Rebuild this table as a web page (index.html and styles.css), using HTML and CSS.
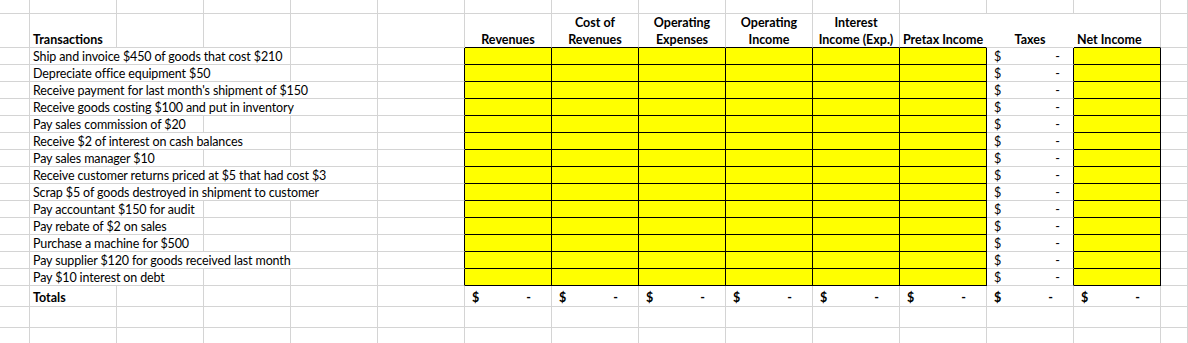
FILE: index.html
```html
<!DOCTYPE html>
<html>
<head>
<meta charset="utf-8">
<link rel="stylesheet" href="styles.css">
</head>
<body>
<div class="sheet">
  <!-- row 0 -->
  <div class="c"></div><div class="c"></div><div class="c"></div><div class="c"></div><div class="c"></div>
  <div class="c"></div><div class="c"></div><div class="c"></div><div class="c"></div><div class="c"></div>
  <div class="c"></div><div class="c"></div><div class="c"></div><div class="c"></div><div class="c"></div>

  <!-- header -->
  <div class="c"></div>
  <div class="c h"><span>Transactions</span></div>
  <div class="c"></div><div class="c"></div><div class="c"></div><div class="c"></div>
  <div class="c h hc bkb"><span>Revenues</span></div>
  <div class="c h hc bkb"><span>Cost of<br>Revenues</span></div>
  <div class="c h hc bkb"><span>Operating<br>Expenses</span></div>
  <div class="c h hc bkb"><span>Operating<br>Income</span></div>
  <div class="c h hc bkb"><span>Interest<br>Income (Exp.)</span></div>
  <div class="c h hc bkb nr"><span>Pretax Income</span></div>
  <div class="c h hc nr"><span>Taxes</span></div>
  <div class="c h bkb"><span>Net Income</span></div>
  <div class="c"></div>

  <!-- 1 -->
  <div class="c"></div>
  <div class="c d s3"><span>Ship and invoice $450 of goods that cost $210</span></div>
  <div class="c"></div><div class="c bkr"></div>
  <div class="c y"></div><div class="c y"></div><div class="c y"></div><div class="c y"></div><div class="c y"></div><div class="c y"></div>
  <div class="c m bkr"><span>$</span><span>-</span></div>
  <div class="c y"></div>
  <div class="c"></div>

  <!-- 2 -->
  <div class="c"></div>
  <div class="c d s3"><span>Depreciate office equipment $50</span></div>
  <div class="c"></div><div class="c bkr"></div>
  <div class="c y"></div><div class="c y"></div><div class="c y"></div><div class="c y"></div><div class="c y"></div><div class="c y"></div>
  <div class="c m bkr"><span>$</span><span>-</span></div>
  <div class="c y"></div>
  <div class="c"></div>

  <!-- 3 -->
  <div class="c"></div>
  <div class="c d s4"><span>Receive payment for last month's shipment of $150</span></div>
  <div class="c bkr"></div>
  <div class="c y"></div><div class="c y"></div><div class="c y"></div><div class="c y"></div><div class="c y"></div><div class="c y"></div>
  <div class="c m bkr"><span>$</span><span>-</span></div>
  <div class="c y"></div>
  <div class="c"></div>

  <!-- 4 -->
  <div class="c"></div>
  <div class="c d s4"><span>Receive goods costing $100 and put in inventory</span></div>
  <div class="c bkr"></div>
  <div class="c y"></div><div class="c y"></div><div class="c y"></div><div class="c y"></div><div class="c y"></div><div class="c y"></div>
  <div class="c m bkr"><span>$</span><span>-</span></div>
  <div class="c y"></div>
  <div class="c"></div>

  <!-- 5 -->
  <div class="c"></div>
  <div class="c d s2"><span>Pay sales commission of $20</span></div>
  <div class="c"></div><div class="c"></div><div class="c bkr"></div>
  <div class="c y"></div><div class="c y"></div><div class="c y"></div><div class="c y"></div><div class="c y"></div><div class="c y"></div>
  <div class="c m bkr"><span>$</span><span>-</span></div>
  <div class="c y"></div>
  <div class="c"></div>

  <!-- 6 -->
  <div class="c"></div>
  <div class="c d s3"><span>Receive $2 of interest on cash balances</span></div>
  <div class="c"></div><div class="c bkr"></div>
  <div class="c y"></div><div class="c y"></div><div class="c y"></div><div class="c y"></div><div class="c y"></div><div class="c y"></div>
  <div class="c m bkr"><span>$</span><span>-</span></div>
  <div class="c y"></div>
  <div class="c"></div>

  <!-- 7 -->
  <div class="c"></div>
  <div class="c d s2"><span>Pay sales manager $10</span></div>
  <div class="c"></div><div class="c"></div><div class="c bkr"></div>
  <div class="c y"></div><div class="c y"></div><div class="c y"></div><div class="c y"></div><div class="c y"></div><div class="c y"></div>
  <div class="c m bkr"><span>$</span><span>-</span></div>
  <div class="c y"></div>
  <div class="c"></div>

  <!-- 8 -->
  <div class="c"></div>
  <div class="c d s4"><span>Receive customer returns priced at $5 that had cost $3</span></div>
  <div class="c bkr"></div>
  <div class="c y"></div><div class="c y"></div><div class="c y"></div><div class="c y"></div><div class="c y"></div><div class="c y"></div>
  <div class="c m bkr"><span>$</span><span>-</span></div>
  <div class="c y"></div>
  <div class="c"></div>

  <!-- 9 -->
  <div class="c"></div>
  <div class="c d s4"><span>Scrap $5 of goods destroyed in shipment to customer</span></div>
  <div class="c bkr"></div>
  <div class="c y"></div><div class="c y"></div><div class="c y"></div><div class="c y"></div><div class="c y"></div><div class="c y"></div>
  <div class="c m bkr"><span>$</span><span>-</span></div>
  <div class="c y"></div>
  <div class="c"></div>

  <!-- 10 -->
  <div class="c"></div>
  <div class="c d s2"><span>Pay accountant $150 for audit</span></div>
  <div class="c"></div><div class="c"></div><div class="c bkr"></div>
  <div class="c y"></div><div class="c y"></div><div class="c y"></div><div class="c y"></div><div class="c y"></div><div class="c y"></div>
  <div class="c m bkr"><span>$</span><span>-</span></div>
  <div class="c y"></div>
  <div class="c"></div>

  <!-- 11 -->
  <div class="c"></div>
  <div class="c d s2"><span>Pay rebate of $2 on sales</span></div>
  <div class="c"></div><div class="c"></div><div class="c bkr"></div>
  <div class="c y"></div><div class="c y"></div><div class="c y"></div><div class="c y"></div><div class="c y"></div><div class="c y"></div>
  <div class="c m bkr"><span>$</span><span>-</span></div>
  <div class="c y"></div>
  <div class="c"></div>

  <!-- 12 -->
  <div class="c"></div>
  <div class="c d s2"><span>Purchase a machine for $500</span></div>
  <div class="c"></div><div class="c"></div><div class="c bkr"></div>
  <div class="c y"></div><div class="c y"></div><div class="c y"></div><div class="c y"></div><div class="c y"></div><div class="c y"></div>
  <div class="c m bkr"><span>$</span><span>-</span></div>
  <div class="c y"></div>
  <div class="c"></div>

  <!-- 13 -->
  <div class="c"></div>
  <div class="c d s4"><span>Pay supplier $120 for goods received last month</span></div>
  <div class="c bkr"></div>
  <div class="c y"></div><div class="c y"></div><div class="c y"></div><div class="c y"></div><div class="c y"></div><div class="c y"></div>
  <div class="c m bkr"><span>$</span><span>-</span></div>
  <div class="c y"></div>
  <div class="c"></div>

  <!-- 14 -->
  <div class="c"></div>
  <div class="c d s2"><span>Pay $10 interest on debt</span></div>
  <div class="c"></div><div class="c"></div><div class="c bkr"></div>
  <div class="c y"></div><div class="c y"></div><div class="c y"></div><div class="c y"></div><div class="c y"></div><div class="c y"></div>
  <div class="c m bkr"><span>$</span><span>-</span></div>
  <div class="c y"></div>
  <div class="c"></div>

  <!-- totals -->
  <div class="c"></div>
  <div class="c t"><span>Totals</span></div>
  <div class="c"></div><div class="c"></div><div class="c"></div><div class="c"></div>
  <div class="c t m tm"><span>$</span><span>-</span></div>
  <div class="c t m tm"><span>$</span><span>-</span></div>
  <div class="c t m tm"><span>$</span><span>-</span></div>
  <div class="c t m tm"><span>$</span><span>-</span></div>
  <div class="c t m tm"><span>$</span><span>-</span></div>
  <div class="c t m tm"><span>$</span><span>-</span></div>
  <div class="c t m tm"><span>$</span><span>-</span></div>
  <div class="c t m tm"><span>$</span><span>-</span></div>
  <div class="c"></div>

  <!-- empty rows -->
  <div class="c"></div><div class="c"></div><div class="c"></div><div class="c"></div><div class="c"></div>
  <div class="c"></div><div class="c"></div><div class="c"></div><div class="c"></div><div class="c"></div>
  <div class="c"></div><div class="c"></div><div class="c"></div><div class="c"></div><div class="c"></div>

  <div class="c"></div><div class="c"></div><div class="c"></div><div class="c"></div><div class="c"></div>
  <div class="c"></div><div class="c"></div><div class="c"></div><div class="c"></div><div class="c"></div>
  <div class="c"></div><div class="c"></div><div class="c"></div><div class="c"></div><div class="c"></div>
</div>
</body>
</html>
```

FILE: styles.css
```css
* {
  box-sizing: border-box;
  margin: 0;
  padding: 0;
}

html,
body {
  width: 1188px;
  height: 343px;
  overflow: hidden;
  background: #ffffff;
}

body {
  font-family: Lato, "Liberation Sans", sans-serif;
  font-size: 12.5px;
  color: #000000;
}

.sheet {
  display: grid;
  grid-template-columns: 30px repeat(13, 87px) 1fr;
  grid-template-rows: 14px 34px repeat(14, 17px) 21px 21px 21px;
}

.c {
  display: flex;
  align-items: flex-end;
  min-width: 0;
  padding: 0 3px;
  line-height: 15px;
  white-space: nowrap;
  border-right: 1px solid #d4d4d4;
  border-bottom: 1px solid #d4d4d4;
}

.s2 { grid-column: span 2; }
.s3 { grid-column: span 3; }
.s4 { grid-column: span 4; }

.d {
  letter-spacing: -0.13px;
}

.h {
  font-weight: 700;
}

.hc {
  justify-content: center;
  text-align: center;
  line-height: 17px;
  padding: 0;
}

.hc span {
  margin-bottom: -1px;
}

.y {
  background: #ffff00;
  border-right-color: #000000;
  border-bottom-color: #000000;
}

.bkr {
  border-right-color: #000000;
}

.bkb {
  border-bottom-color: #000000;
}

.nr {
  border-right-color: transparent;
}

.m {
  justify-content: space-between;
  padding: 0 13px 0 7px;
}

.t {
  font-weight: 700;
  padding-bottom: 1px;
}

.tm {
  padding: 0 20px 1px 7px;
}
```
